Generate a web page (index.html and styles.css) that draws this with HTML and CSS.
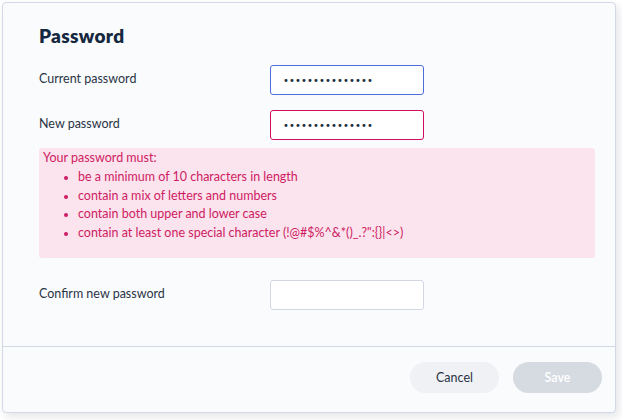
FILE: index.html
```html
<!DOCTYPE html>
<html lang="en">
<head>
<meta charset="utf-8">
<title>Password</title>
<link rel="stylesheet" href="styles.css">
</head>
<body>
<div class="card">
  <div class="content">
    <h2 class="title">Password</h2>
    <div class="row">
      <label class="label" for="cur">Current password</label>
      <input id="cur" class="field focus" type="password" value="abcdefghijklmno">
    </div>
    <div class="row row2">
      <label class="label" for="new">New password</label>
      <input id="new" class="field error" type="password" value="abcdefghijklmno">
    </div>
    <div class="rules">
      <div class="rules-head">Your password must:</div>
      <ul class="rules-list">
        <li>be a minimum of 10 characters in length</li>
        <li>contain a mix of letters and numbers</li>
        <li>contain both upper and lower case</li>
        <li>contain at least one special character (!@#$%^&amp;*()_.?":{}|&lt;&gt;)</li>
      </ul>
    </div>
    <div class="row row3">
      <label class="label" for="conf">Confirm new password</label>
      <input id="conf" class="field" type="password" value="">
    </div>
  </div>
  <div class="footer">
    <button class="btn cancel" type="button">Cancel</button>
    <button class="btn save" type="button" disabled>Save</button>
  </div>
</div>
</body>
</html>
```
FILE: styles.css
```css
* { box-sizing: border-box; }
html, body { margin: 0; padding: 0; background: #ffffff; }
body {
  font-family: Lato, "Noto Sans", sans-serif;
  color: #2b3445;
  width: 622px;
  height: 420px;
  overflow: hidden;
}
.card {
  margin: 2px 0 0 2px;
  width: 614px;
  height: 411px;
  background: #f9fbfd;
  border: 1px solid #d2d8e6;
  border-radius: 4px;
  box-shadow: 3px 4px 8px rgba(40, 50, 70, 0.12);
  display: flex;
  flex-direction: column;
}
.content {
  padding: 20px 19px 36px 36px;
  flex: 1;
}
.title {
  margin: 0;
  font-size: 19px;
  line-height: 26px;
  font-weight: 800;
  color: #16283f;
  letter-spacing: 0.3px;
}
.row {
  display: flex;
  align-items: center;
  margin-top: 16px;
}
.row2 { margin-top: 15px; }
.row3 { margin-top: 22px; }
.label {
  width: 231px;
  font-size: 12.5px;
  color: #2b3445;
  margin-bottom: 3px;
}
.field {
  width: 154px;
  height: 30px;
  border: 1px solid #d3d7e5;
  border-radius: 3px;
  background: #ffffff;
  padding: 0 12px;
  font-family: "DejaVu Sans", sans-serif;
  font-size: 10px;
  letter-spacing: 0.1px;
  color: #1d2b40;
  outline: none;
}
.field.focus { border-color: #4d6ddb; }
.field.error { border-color: #cf0d61; }
.rules {
  margin-top: 8px;
  width: 556px;
  height: 110px;
  background: #fbe4ed;
  border-radius: 3px;
  padding: 1px 4px 0;
  color: #cf1b63;
  font-size: 12.5px;
}
.rules-head { line-height: 18px; }
.rules-list {
  margin: 0;
  padding-left: 35px;
  padding-top: 1px;
}
.rules-list li {
  line-height: 18.5px;
}
.rules-list li::marker { font-size: 11px; }
.footer {
  border-top: 1px solid #d2d8e6;
  display: flex;
  justify-content: flex-end;
  gap: 14px;
  padding: 15px 13px 0 0;
  height: 66px;
}
.btn {
  width: 89px;
  height: 31px;
  border: none;
  border-radius: 16px;
  font-family: Lato, "Noto Sans", sans-serif;
  font-size: 12.5px;
  cursor: pointer;
}
.cancel { background: #eff1f4; color: #2b3445; }
.save { background: #d6dbe1; color: #ffffff; font-weight: 600; }
```
